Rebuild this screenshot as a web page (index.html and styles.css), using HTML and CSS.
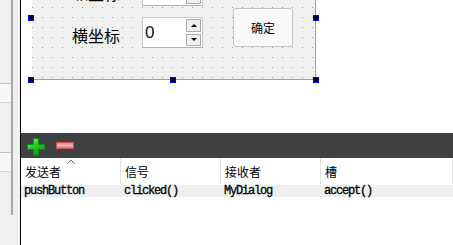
FILE: index.html
```html
<!DOCTYPE html>
<html lang="zh">
<head>
    <meta charset="UTF-8">
    <title>MyDialog - 设计器</title>
    <link rel="stylesheet" href="styles.css">
</head>
<body>
<div class="app">

    <!-- left dock edge -->
    <aside class="side">
        <div class="side-tabs">
            <div class="side-tab"></div>
            <div class="side-tab side-tab-low"></div>
        </div>
        <div class="side-rail"></div>
    </aside>

    <main class="main">

        <!-- form being edited -->
        <section class="design">
            <div class="form">
                <div class="label label-x">纵坐标</div>
                <div class="spin spin-x">
                    <div class="spin-value">0</div>
                    <div class="spin-btns">
                        <div class="spin-btn"><span class="tri-up"></span></div>
                        <div class="spin-btn"><span class="tri-down"></span></div>
                    </div>
                </div>

                <div class="label label-y">横坐标</div>
                <div class="spin spin-y">
                    <div class="spin-value">0</div>
                    <div class="spin-btns">
                        <div class="spin-btn"><span class="tri-up"></span></div>
                        <div class="spin-btn"><span class="tri-down"></span></div>
                    </div>
                </div>

                <button class="push">确定</button>
            </div>

            <span class="handle h-tl"></span>
            <span class="handle h-tr"></span>
            <span class="handle h-bl"></span>
            <span class="handle h-bm"></span>
            <span class="handle h-br"></span>
        </section>

        <!-- signal/slot editor -->
        <div class="toolbar">
            <svg class="ico-plus" width="18" height="18" viewBox="0 0 18 18">
                <defs>
                    <linearGradient id="gPlus" x1="0" y1="0" x2="0.6" y2="1">
                        <stop offset="0" stop-color="#9af29a"/>
                        <stop offset="0.45" stop-color="#2cd02c"/>
                        <stop offset="1" stop-color="#0e9a0e"/>
                    </linearGradient>
                </defs>
                <polygon points="6.5,0.5 11.5,0.5 11.5,6.5 17.5,6.5 17.5,11.5 11.5,11.5 11.5,17.5 6.5,17.5 6.5,11.5 0.5,11.5 0.5,6.5 6.5,6.5"
                         fill="url(#gPlus)" stroke="#128a12"/>
            </svg>
            <svg class="ico-minus" width="18" height="7" viewBox="0 0 18 7">
                <defs>
                    <linearGradient id="gMinus" x1="0" y1="0" x2="0" y2="1">
                        <stop offset="0" stop-color="#e87878"/>
                        <stop offset="0.5" stop-color="#f8b4b4"/>
                        <stop offset="1" stop-color="#e06868"/>
                    </linearGradient>
                </defs>
                <rect x="0.5" y="0.5" width="17" height="6" fill="url(#gMinus)" stroke="#c85454"/>
            </svg>
        </div>

        <div class="conn">
            <div class="conn-head">
                <div class="cell">发送者
                    <svg class="sort" width="8" height="5" viewBox="0 0 8 5">
                        <polyline points="0.5,4.5 4,1 7.5,4.5" fill="none" stroke="#6a6a6a"/>
                    </svg>
                </div>
                <div class="cell">信号</div>
                <div class="cell">接收者</div>
                <div class="cell">槽</div>
            </div>
            <div class="conn-row">
                <div class="cell">pushButton</div>
                <div class="cell">clicked()</div>
                <div class="cell">MyDialog</div>
                <div class="cell">accept()</div>
            </div>
        </div>
    </main>
</div>
</body>
</html>
```

FILE: styles.css
```css
body {
    margin: 0;
    font-family: "Noto Sans CJK SC", sans-serif;
    background: #fff;
    color: #000;
}
.app {
    display: flex;
    width: 453px;
    height: 245px;
    overflow: hidden;
}

/* left dock */
.side {
    display: flex;
    width: 20px;
    flex: none;
    background: #f0f0f0;
    border-right: 1px solid #000;
}
.side-tabs {
    width: 11px;
    padding-top: 83px;
}
.side-tab {
    height: 18px;
    background: #f7f7f7;
    border-top: 1px solid #c6c6c6;
    border-bottom: 1px solid #d6d6d6;
}
.side-tab-low {
    margin-top: 49px;
}
.side-rail {
    width: 2px;
    height: 215px;
    background: #a9a9a9;
}

.main {
    flex: 1;
    display: flex;
    flex-direction: column;
    background: #fff;
}

/* design area */
.design {
    position: relative;
    height: 133px;
    flex: none;
    overflow: hidden;
}
.form {
    position: relative;
    margin-left: 11px;
    width: 283px;
    height: 79px;
    border-right: 1px solid #a0a0a0;
    border-bottom: 1px solid #a0a0a0;
    background-color: #f0f0f0;
    background-image:
        linear-gradient(to bottom, transparent 1px, #f0f0f0 1px),
        linear-gradient(to right, #a0a0a0 1px, #f0f0f0 1px);
    background-size: 10px 10px, 10px 10px;
    background-position: 0 7px, 0 7px;
}
.label {
    position: absolute;
    left: 40px;
    font-size: 16px;
    line-height: 16px;
    white-space: nowrap;
}
.label-x { top: -15px; }
.label-y { top: 27px; }

.spin {
    position: absolute;
    left: 110px;
    width: 61px;
    height: 31px;
    box-sizing: border-box;
    display: flex;
    background: #fff;
    border: 1px solid #c9c9c9;
    border-bottom-color: #b0b0b0;
}
.spin-x { top: -25px; }
.spin-y { top: 17px; }
.spin-value {
    flex: 1;
    padding-left: 2px;
    font-family: "Liberation Sans", sans-serif;
    font-size: 17px;
    line-height: 29px;
    color: #101030;
}
.spin-btns {
    display: flex;
    flex-direction: column;
    gap: 2px;
    padding: 1px 1px 1px 0;
    width: 15px;
}
.spin-btn {
    flex: 1;
    display: flex;
    align-items: center;
    justify-content: center;
    background: #f0f0f0;
    border: 1px solid #ababab;
}
.tri-up, .tri-down {
    width: 0;
    height: 0;
    border-left: 3px solid transparent;
    border-right: 3px solid transparent;
}
.tri-up { border-bottom: 3px solid #000; }
.tri-down { border-top: 3px solid #000; }

.push {
    position: absolute;
    left: 201px;
    top: 8px;
    width: 60px;
    height: 39px;
    padding: 0;
    font-family: "Noto Sans CJK SC", sans-serif;
    font-size: 12px;
    color: #000;
    background: #f9f9f9;
    border: 1px solid #c4c4c4;
    border-radius: 3px;
}

.handle {
    position: absolute;
    width: 6px;
    height: 6px;
    box-sizing: border-box;
    background: #000;
    border: 1px solid #0000ff;
}
.h-tl { left: 7px; top: 15px; }
.h-bl { left: 7px; top: 77px; }
.h-bm { left: 149px; top: 77px; }
.h-tr { left: 292px; top: 15px; }
.h-br { left: 292px; top: 77px; }

/* signal / slot editor */
.toolbar {
    display: flex;
    align-items: center;
    gap: 11px;
    height: 25px;
    flex: none;
    padding-left: 6px;
    background: #404142;
}
.ico-plus { margin-top: 3px; }

.conn {
    font-size: 12px;
}
.conn-head, .conn-row {
    display: grid;
    grid-template-columns: 100px 100px 100px 1fr;
}
.conn-head .cell {
    position: relative;
    height: 26px;
    box-sizing: border-box;
    padding: 8px 0 0 4px;
    line-height: 12px;
    border-right: 1px solid #e3e3e3;
}
.sort {
    position: absolute;
    top: 1px;
    left: 46px;
}
.conn-row {
    margin-top: 1px;
    background: #efefef;
}
.conn-row .cell {
    padding-left: 3px;
    font-family: "Liberation Mono", monospace;
    font-size: 12px;
    letter-spacing: -1.2px;
    line-height: 12px;
    height: 12px;
    color: #000;
    -webkit-text-stroke: 0.3px #000;
}
```
